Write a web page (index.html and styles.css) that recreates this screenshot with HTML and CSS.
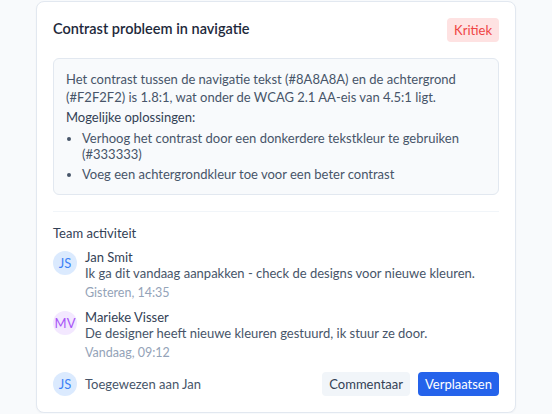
FILE: index.html
```html
<!DOCTYPE html>
<html lang="nl">
<head>
<meta charset="utf-8">
<title>Contrast probleem</title>
<link rel="stylesheet" href="styles.css">
</head>
<body>
<div class="card">
  <div class="header">
    <h2 class="title">Contrast probleem in navigatie</h2>
    <span class="badge">Kritiek</span>
  </div>
  <div class="info">
    <p class="desc">Het contrast tussen de navigatie tekst (#8A8A8A) en de achtergrond (#F2F2F2) is 1.8:1, wat onder de WCAG 2.1 AA-eis van 4.5:1 ligt.</p>
    <p class="sub">Mogelijke oplossingen:</p>
    <ul class="list">
      <li>Verhoog het contrast door een donkerdere tekstkleur te gebruiken (#333333)</li>
      <li>Voeg een achtergrondkleur toe voor een beter contrast</li>
    </ul>
  </div>
  <div class="activity">
    <h3 class="act-title">Team activiteit</h3>
    <div class="comments">
      <div class="comment">
        <span class="avatar av-blue">JS</span>
        <div class="c-body">
          <div class="c-name">Jan Smit</div>
          <div class="c-text">Ik ga dit vandaag aanpakken - check de designs voor nieuwe kleuren.</div>
          <div class="c-time">Gisteren, 14:35</div>
        </div>
      </div>
      <div class="comment">
        <span class="avatar av-purple">MV</span>
        <div class="c-body">
          <div class="c-name">Marieke Visser</div>
          <div class="c-text">De designer heeft nieuwe kleuren gestuurd, ik stuur ze door.</div>
          <div class="c-time">Vandaag, 09:12</div>
        </div>
      </div>
    </div>
    <div class="footer">
      <div class="assignee">
        <span class="avatar av-blue">JS</span>
        <span class="assign-text">Toegewezen aan Jan</span>
      </div>
      <div class="actions">
        <button class="btn btn-light">Commentaar</button>
        <button class="btn btn-primary">Verplaatsen</button>
      </div>
    </div>
  </div>
</div>
</body>
</html>
```
FILE: styles.css
```css
* { box-sizing: border-box; }
html, body { margin: 0; padding: 0; }
body {
  background: #f8fafc;
  font-family: Lato, "Noto Sans", sans-serif;
  font-size: 13px;
  color: #475569;
}
.card {
  width: 480px;
  margin: 1px auto 0;
  background: #ffffff;
  border: 1px solid #e2e8f0;
  border-radius: 8px;
  padding: 16px;
  box-shadow: 0 1px 2px rgba(15, 23, 42, 0.04);
}
.header {
  display: flex;
  justify-content: space-between;
  align-items: flex-start;
}
.title {
  margin: 0;
  font-size: 14.5px;
  line-height: 22px;
  font-weight: 600;
  color: #1e293b;
}
.badge {
  background: #fee2e2;
  color: #ef4444;
  font-size: 13px;
  line-height: 24px;
  height: 24px;
  padding: 0 7px;
  border-radius: 4px;
}
.info {
  margin-top: 16px;
  background: #f8fafc;
  border: 1px solid #e2e8f0;
  border-radius: 6px;
  padding: 11px 12px 12px;
}
.desc {
  margin: 0 0 2px;
  line-height: 18px;
  color: #475569;
}
.sub {
  margin: 0 0 4px;
  line-height: 18px;
  color: #334155;
}
.list {
  margin: 0;
  padding-left: 16px;
  display: flex;
  flex-direction: column;
  gap: 4px;
  line-height: 16px;
  color: #475569;
}
.activity {
  margin-top: 16px;
  border-top: 1px solid #f1f5f9;
  padding-top: 12px;
}
.act-title {
  margin: 0 0 7px;
  font-size: 13px;
  line-height: 18px;
  font-weight: 400;
  color: #334155;
}
.comments {
  display: flex;
  flex-direction: column;
  gap: 8px;
}
.comment {
  display: flex;
  gap: 8px;
  align-items: flex-start;
}
.avatar {
  flex: none;
  width: 24px;
  height: 24px;
  border-radius: 50%;
  display: flex;
  align-items: center;
  justify-content: center;
  font-size: 13px;
}
.comment .avatar { margin-top: 2px; }
.av-blue { background: #dbeafe; color: #3b82f6; }
.av-purple { background: #f3e8ff; color: #a855f7; }
.c-name { line-height: 16px; color: #334155; }
.c-text { line-height: 16px; color: #475569; }
.c-time { margin-top: 4px; line-height: 16px; font-size: 12.5px; color: #94a3b8; }
.footer {
  margin-top: 11px;
  display: flex;
  justify-content: space-between;
  align-items: center;
}
.assignee {
  display: flex;
  align-items: center;
  gap: 8px;
}
.assign-text { color: #475569; }
.actions { display: flex; gap: 8px; }
.btn {
  font-family: inherit;
  font-size: 13px;
  height: 24px;
  padding: 0 7px;
  border: none;
  border-radius: 4px;
  cursor: pointer;
}
.btn-light { background: #f1f5f9; color: #334155; }
.btn-primary { background: #2563eb; color: #ffffff; }
```
